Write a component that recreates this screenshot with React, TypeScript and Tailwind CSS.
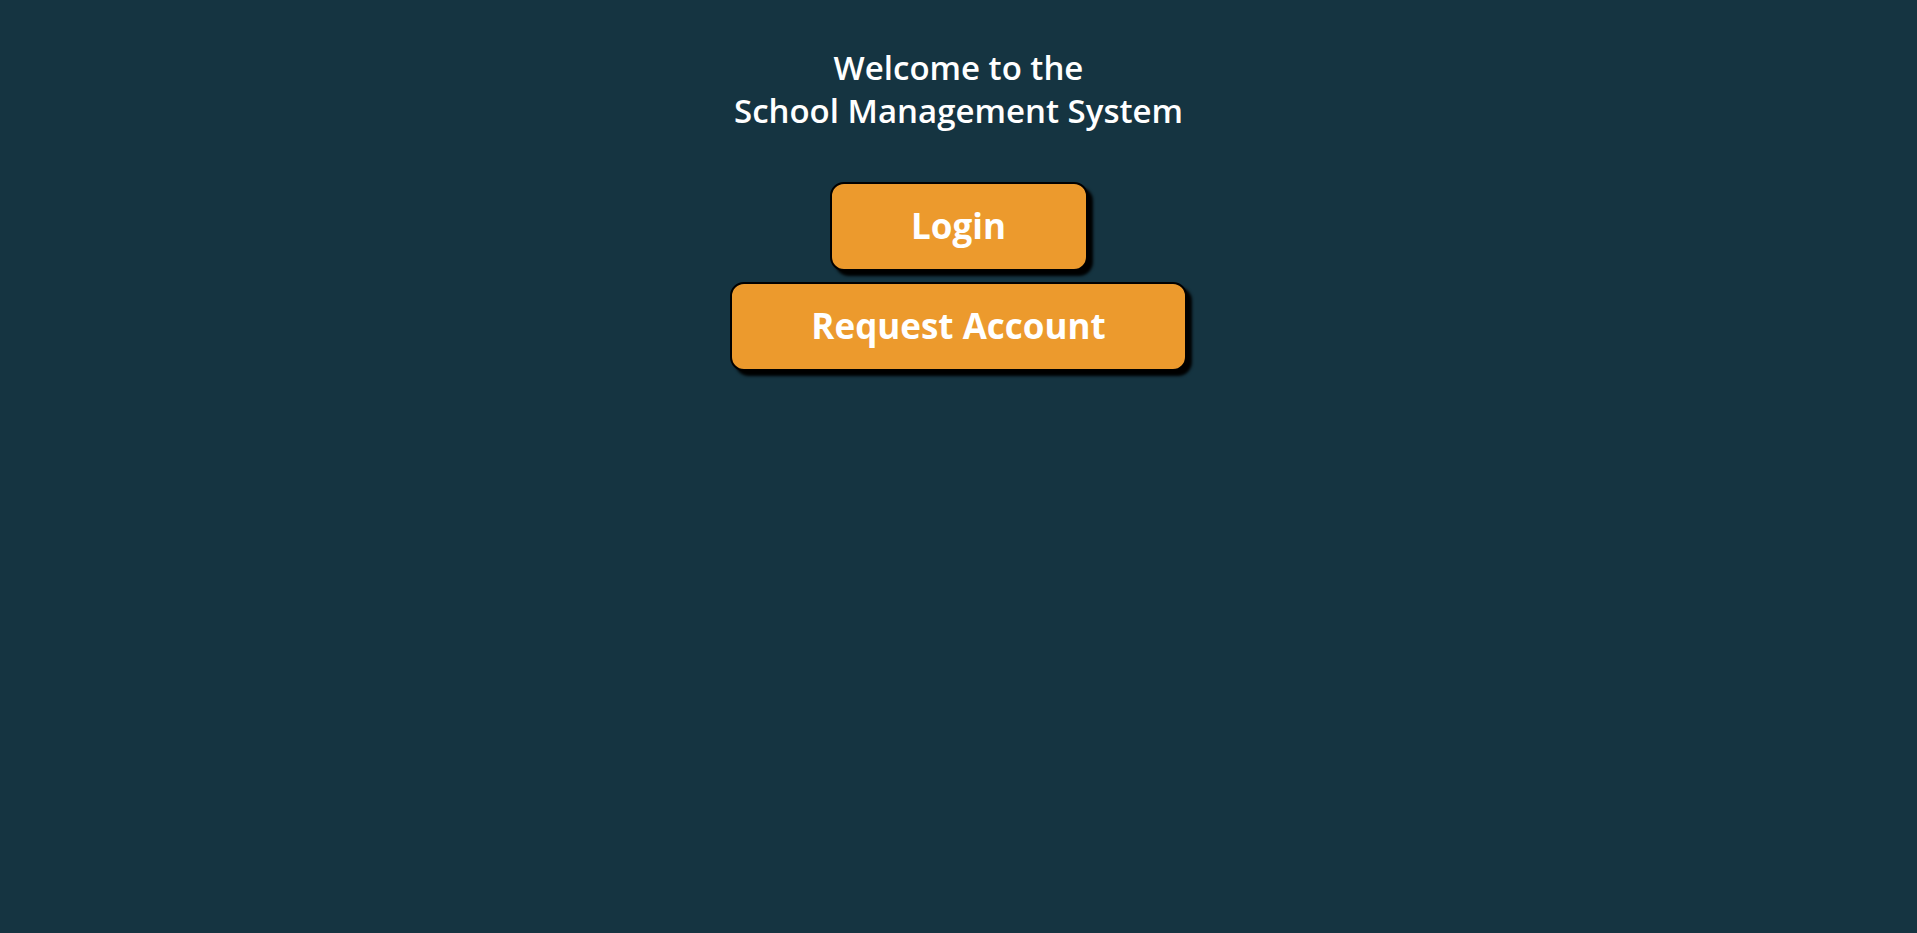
import React from "react";

function MenuButton({ label, width }: { label: string; width: string }) {
  return (
    <button
      className={`${width} h-[89px] rounded-[14px] border-2 border-black bg-[#ec9a2d] text-white text-[35px] font-bold shadow-[5px_5px_3px_#000] flex items-center justify-center`}
    >
      {label}
    </button>
  );
}

export default function App() {
  return (
    <div className="min-h-screen w-full bg-[#153441] font-['Open_Sans',sans-serif]">
      <div className="flex flex-col items-center pt-[46px]">
        <h1 className="text-center text-white text-[33px] leading-[43px] font-semibold">
          Welcome to the
          <br />
          School Management System
        </h1>
        <div className="flex flex-col items-center gap-[11px] mt-[50px]">
          <MenuButton label="Login" width="w-[258px]" />
          <MenuButton label="Request Account" width="w-[457px]" />
        </div>
      </div>
    </div>
  );
}
